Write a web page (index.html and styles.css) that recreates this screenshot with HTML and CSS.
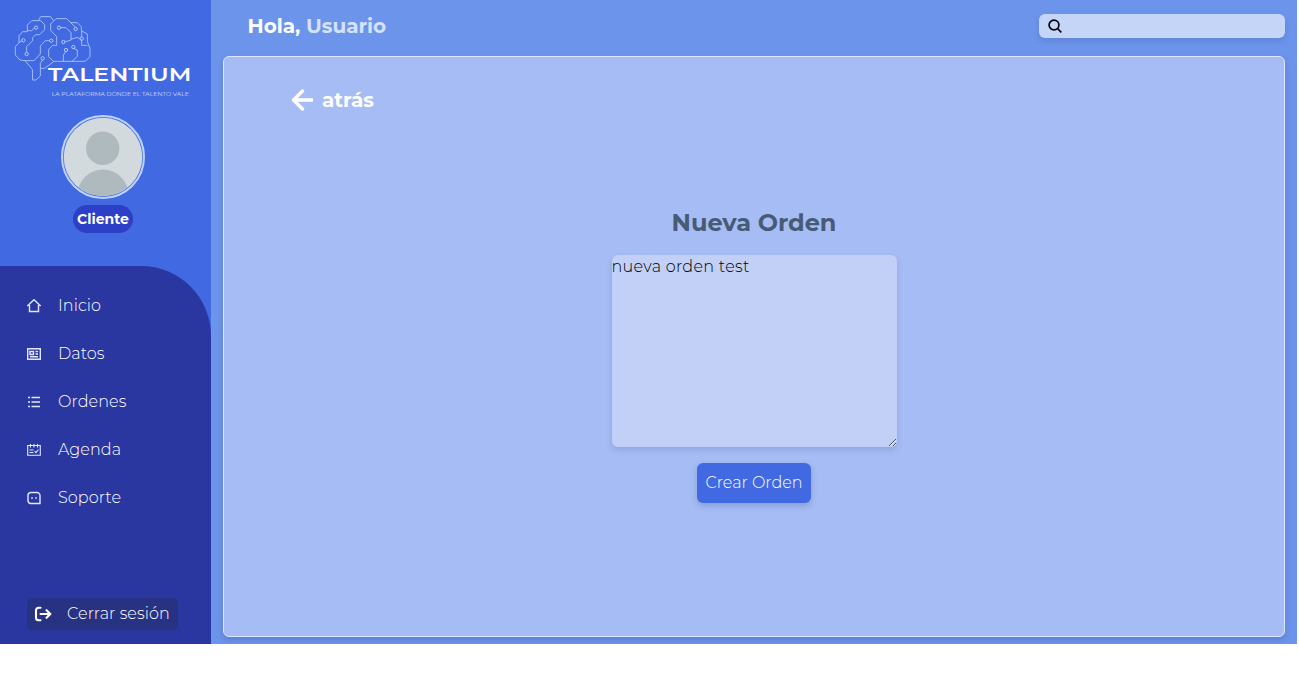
FILE: index.html
```html
<!DOCTYPE html>
<html lang="es">
<head>
<meta charset="utf-8">
<title>Talentium</title>
<link rel="stylesheet" href="styles.css">
</head>
<body>
<div class="app">
  <aside class="sidebar">
    <svg class="logo" viewBox="0 0 636 330" fill="none" stroke="#b3c7f8" stroke-width="2.6">
      <path d="M98 240L97 208L75 182L60 180L46 165V140L57 128V107L68 95H82V75L95 62H122L134 74V89L119 104H107L98 113V122L80 140V157"/>
      <path d="M115 62L122 50H152L160 62M75 182H102L121 162V138L136 122H149"/>
      <path d="M152 91V72L168 56H200L212 68H232L244 80V92L262 102V125L270 145V170L256 184H160L146 170V148L158 136H170V110L152 91"/>
      <path d="M98 240H108L121 228V205H134L162 184M128 179L121 190V205M182 83H198L213 98V120L194 126M212 68L227 82M245 92V111M213 118L232 112L245 120V136H262M190 184V165L198 154M220 145L232 150V169L216 184M57 128L67 121M103 84L95 92H82"/>
      <g stroke-width="3"><circle cx="108" cy="83" r="5"/><circle cx="70" cy="121" r="5"/><circle cx="80" cy="162" r="5"/><circle cx="154" cy="122" r="5"/><circle cx="128" cy="175" r="5"/><circle cx="177" cy="83" r="5"/><circle cx="227" cy="87" r="5"/><circle cx="245" cy="116" r="5"/><circle cx="190" cy="126" r="5"/><circle cx="198" cy="150" r="5"/><circle cx="220" cy="141" r="5"/></g>
      <text class="logo-name" x="144" y="243" textLength="430" lengthAdjust="spacingAndGlyphs">TALENTIUM</text>
      <text class="logo-tag" x="155" y="287" textLength="412" lengthAdjust="spacingAndGlyphs">LA PLATAFORMA DONDE EL TALENTO VALE</text>
    </svg>
    <div class="profile">
      <svg class="avatar" viewBox="0 0 84 84">
        <defs><clipPath id="face"><circle cx="42" cy="42" r="39"/></clipPath></defs>
        <circle cx="42" cy="42" r="41" fill="none" stroke="#bfd3fb" stroke-width="2"/>
        <circle cx="42" cy="42" r="39.300" fill="#d2dadd"/>
        <g clip-path="url(#face)" fill="#aebabd"><circle cx="41.7" cy="33.3" r="16.7"/><circle cx="42" cy="80" r="25.5"/></g>
      </svg>
      <span class="role">Cliente</span>
    </div>
    <nav class="menu">
      <a class="item"><svg class="icon" viewBox="0 0 16 16"><path d="M3.500 7v6.500h9V7M1.300 8L8 1.800l6.700 6.200"/></svg><span>Inicio</span></a>
      <a class="item"><svg class="icon" viewBox="0 0 16 16"><path d="M1.700 2.700h12.600v10.600H1.700zM4 5.500h3.500v3H4zM9.500 5.500H12M9.500 8H12M4 10.800h8"/></svg><span>Datos</span></a>
      <a class="item"><svg class="icon" viewBox="0 0 16 16"><path d="M5.500 3.500H14M5.500 8H14M5.500 12.500H14M2 3.500h2M2 8h2M2 12.500h2"/></svg><span>Ordenes</span></a>
      <a class="item"><svg class="icon thin" viewBox="0 0 16 16"><path d="M1.700 3.500h12.600v9.800H1.700zM4.500 2v3.500M8 2v3.500M11.500 2v3.500M3.500 8h4M3.500 10.500h4M8.500 9l1.500 1.700L12.500 7.500"/></svg><span>Agenda</span></a>
      <a class="item"><svg class="icon" viewBox="0 0 16 16"><path d="M5 2.500h6a3 3 0 0 1 3 3v8H5a3 3 0 0 1-3-3v-5a3 3 0 0 1 3-3zM5.200 8h1.600M9.200 8h1.600"/></svg><span>Soporte</span></a>
      <a class="logout"><svg class="exit" viewBox="0 0 18 16"><path d="M6.500 1.800H4.500a2.500 2.500 0 0 0-2.500 2.500v7.400a2.500 2.500 0 0 0 2.500 2.500h2M6.500 8h9.500M12.500 4.200L16.400 8l-3.900 3.800"/></svg><span>Cerrar sesión</span></a>
    </nav>
  </aside>
  <main class="main">
    <header class="top">
      <h1 class="hello">Hola, <span class="user">Usuario</span></h1>
      <div class="search"><svg class="lens" viewBox="0 0 14 14"><circle cx="6" cy="6" r="4.900"/><path d="M9.500 9.500L13.300 13.300"/></svg></div>
    </header>
    <section class="panel">
      <a class="back"><svg class="arrow" viewBox="0 0 22 22"><path d="M21 11H3M11.500 2L2.500 11l9 9"/></svg><span>atrás</span></a>
      <form class="form">
        <h2 class="title">Nueva Orden</h2>
        <textarea class="order" spellcheck="false">nueva orden test</textarea>
        <button class="create" type="button">Crear Orden</button>
      </form>
    </section>
  </main>
</div>
</body>
</html>
```
FILE: styles.css
```css
* { box-sizing: border-box; }
body { margin: 0; background: #fff; font: 300 16px/24px Montserrat, Inter, sans-serif; overflow: hidden; }
.app { display: flex; width: 1297px; height: 644px; background: #6d94eb; }
.sidebar { display: flex; flex-direction: column; width: 211px; background: #4169e1; }
.logo { display: block; width: 212px; height: 110px; flex: none; }
.logo-name { font: 600 53px Montserrat, Inter, sans-serif; fill: #fff; stroke: none; }
.logo-tag { font: 400 15px Montserrat, Inter, sans-serif; fill: #d3dfff; stroke: none; }
.profile { display: flex; flex-direction: column; align-items: center; width: 206px; height: 156px; padding-top: 5px; flex: none; }
.avatar { width: 84px; height: 84px; }
.role { width: 60px; height: 28px; margin-top: 6px; border-radius: 14px; background: #2e3fc7; color: #fff; font-size: 14px; font-weight: 700; line-height: 28px; text-align: center; }
.menu { display: flex; flex-direction: column; flex: 1; padding: 16px 26px 14px; background: #2a37a0; border-top-right-radius: 70px; color: #fff; letter-spacing: .08px; }
.item { display: flex; align-items: center; gap: 16px; height: 48px; white-space: nowrap; }
.icon { width: 16px; height: 16px; fill: none; stroke: #e1e8ff; stroke-width: 1.4; }
.thin { stroke-width: 1.1; }
.logout { display: flex; align-items: center; gap: 15px; width: 151px; height: 32px; margin: auto 0 0 1px; padding-left: 7px; border-radius: 5px; background: #273282; white-space: nowrap; }
.exit { width: 18px; height: 16px; fill: none; stroke: #fff; stroke-width: 2.1; stroke-linecap: round; stroke-linejoin: round; }
.main { display: flex; flex-direction: column; flex: 1; padding: 0 12px 7px; }
.top { display: flex; justify-content: space-between; height: 56px; padding: 14px 0 0 25px; }
.hello { margin: 0 0 0 -.5px; font-size: 20px; line-height: 24px; font-weight: 700; color: #fff; }
.user { color: #d5e2fc; }
.search { display: flex; align-items: center; width: 246px; height: 24px; padding-left: 9px; border-radius: 6px; background: #c5d5f7; box-shadow: 0 3px 6px rgba(30, 50, 120, .16); }
.lens { width: 14px; height: 14px; fill: none; stroke: #000; stroke-width: 1.7; }
.panel { display: flex; flex-direction: column; flex: 1; border: 1px solid #dce6fc; border-radius: 6px; background: #a6bcf4; box-shadow: 0 3px 6px rgba(30, 50, 120, .22); }
.back { display: flex; align-items: center; gap: 9px; margin: 31px 0 0 67px; color: #fff; font-size: 20px; font-weight: 700; }
.arrow { width: 22px; height: 22px; fill: none; stroke: #fff; stroke-width: 3.4; stroke-linecap: round; stroke-linejoin: round; }
.form { display: flex; flex-direction: column; align-items: center; padding-top: 95px; }
.title { margin: 0; color: #475b75; font-size: 24px; line-height: 32px; font-weight: 700; }
.order { display: block; width: 285px; height: 192px; margin: 16px 0; padding: 0; border: 0; border-radius: 6px; outline: 0; background: #c2d0f8; color: #000; font: inherit; letter-spacing: .3px; box-shadow: 0 3px 6px rgba(30, 50, 120, .16); resize: both; }
.create { width: 114px; height: 40px; padding: 0; border: 0; border-radius: 6px; background: #4169e1; color: #fff; font: inherit; box-shadow: 0 3px 6px rgba(30, 50, 120, .22); }
```
